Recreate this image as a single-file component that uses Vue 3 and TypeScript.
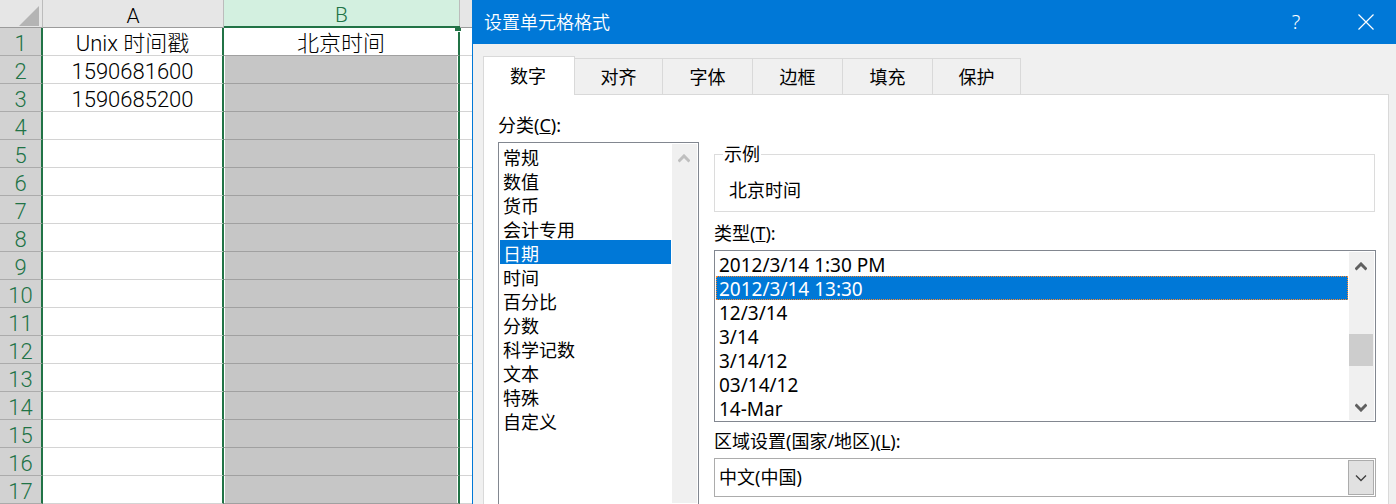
<script setup lang="ts">
import { ref } from 'vue'

interface Row {
  a: string
  b: string
}

const filled: Row[] = [
  { a: 'Unix 时间戳', b: '北京时间' },
  { a: '1590681600', b: '' },
  { a: '1590685200', b: '' },
]
const rows: Row[] = Array.from({ length: 17 }, (_, i) => filled[i] ?? { a: '', b: '' })

const tabs: string[] = ['数字', '对齐', '字体', '边框', '填充', '保护']
const activeTab = ref('数字')

const categories: string[] = [
  '常规', '数值', '货币', '会计专用', '日期', '时间',
  '百分比', '分数', '科学记数', '文本', '特殊', '自定义',
]
const category = ref('日期')

const types: string[] = [
  '2012/3/14 1:30 PM', '2012/3/14 13:30', '12/3/14', '3/14', '3/14/12', '03/14/12', '14-Mar',
]
const type = ref('2012/3/14 13:30')

const locale = ref('中文(中国)')
</script>

<template>
  <div class="page">
    <section class="sheet">
      <table>
        <colgroup>
          <col class="col-num" />
          <col class="col-a" />
          <col class="col-b" />
          <col />
        </colgroup>
        <thead>
          <tr>
            <th class="corner">
              <svg width="20" height="20" viewBox="0 0 20 20" aria-hidden="true">
                <path d="M20 0V20H0Z" fill="#b4b4b4" />
              </svg>
            </th>
            <th scope="col">A</th>
            <th scope="col" class="picked">B<span class="handle"></span></th>
            <th></th>
          </tr>
        </thead>
        <tbody>
          <tr v-for="(row, i) in rows" :key="i" :class="{ first: i === 0 }">
            <th scope="row">{{ i + 1 }}</th>
            <td class="a">{{ row.a }}</td>
            <td class="b">{{ row.b }}</td>
            <td></td>
          </tr>
        </tbody>
      </table>
    </section>

    <section class="dialog" role="dialog" aria-labelledby="dialog-title">
      <header class="titlebar">
        <h1 id="dialog-title">设置单元格格式</h1>
        <button type="button" class="help" aria-label="帮助">?</button>
        <button type="button" class="close" aria-label="关闭">
          <svg width="16" height="16" viewBox="0 0 16 16" aria-hidden="true">
            <path d="M.5 .5L15.5 15.5M15.5 .5L.5 15.5" stroke="#fff" stroke-width="1.2" />
          </svg>
        </button>
      </header>

      <div class="body">
        <nav class="tabs" role="tablist">
          <button
            v-for="tab in tabs"
            :key="tab"
            type="button"
            role="tab"
            class="tab"
            :class="{ active: tab === activeTab }"
            :aria-selected="tab === activeTab"
            @click="activeTab = tab"
          >{{ tab }}</button>
        </nav>

        <div class="panel">
          <div class="left">
            <label for="category">分类(<u>C</u>):</label>
            <div class="listbox grow">
              <select id="category" v-model="category" size="12">
                <option v-for="c in categories" :key="c" :value="c">{{ c }}</option>
              </select>
              <div class="scrollbar" aria-hidden="true">
                <svg class="faint" width="12" height="10" viewBox="0 0 12 10">
                  <path d="M.5 7.5L6 2L11.5 7.5" />
                </svg>
              </div>
            </div>
          </div>

          <div class="right">
            <fieldset>
              <legend>示例</legend>
              <p>北京时间</p>
            </fieldset>

            <label for="type" class="type-label">类型(<u>T</u>):</label>
            <div class="listbox">
              <select id="type" v-model="type" size="7" class="dates">
                <option v-for="t in types" :key="t" :value="t">{{ t }}</option>
              </select>
              <div class="scrollbar" aria-hidden="true">
                <svg width="12" height="10" viewBox="0 0 12 10">
                  <path d="M.5 7.5L6 2L11.5 7.5" />
                </svg>
                <span class="thumb"></span>
                <svg width="12" height="10" viewBox="0 0 12 10">
                  <path d="M.5 2.5L6 8L11.5 2.5" />
                </svg>
              </div>
            </div>

            <label for="locale" class="locale-label">区域设置(国家/地区)(<u>L</u>):</label>
            <div class="combo">
              <select id="locale" v-model="locale">
                <option>中文(中国)</option>
              </select>
              <span class="drop" aria-hidden="true">
                <svg width="12" height="8" viewBox="0 0 12 8">
                  <path d="M1 1.5L6 6.5L11 1.5" />
                </svg>
              </span>
            </div>
          </div>
        </div>
      </div>
    </section>
  </div>
</template>

<style>
body {
  overflow: hidden;
}
</style>

<style scoped>
* {
  box-sizing: border-box;
}

.page {
  display: flex;
  height: 100vh;
  overflow: hidden;
  background: #fff;
  color: #000;
  font-family: "Noto Sans", "Noto Sans CJK SC", sans-serif;
  font-size: 18px;
  line-height: 24px;
}

/* Worksheet */
.sheet {
  flex: 0 0 472px;
  overflow: hidden;
  font-family: Roboto, "Noto Sans CJK SC", sans-serif;
  font-size: 22px;
}

table {
  width: 100%;
  table-layout: fixed;
  border-collapse: separate;
  border-spacing: 0;
}

.col-num {
  width: 43px;
}

.col-a {
  width: 181px;
}

.col-b {
  width: 236px;
}

th,
td {
  height: 28px;
  padding: 4px 0 0;
  border-bottom: 1px solid #d4d4d4;
  font-weight: 300;
  line-height: 23px;
  text-align: center;
  white-space: nowrap;
}

thead th {
  position: relative;
  padding-top: 5px;
  border-right: 1px solid #bcbcbc;
  border-bottom-color: #9b9b9b;
  background: #e6e6e6;
  font-size: 21px;
  line-height: 22px;
}

thead th:last-child {
  border-right: 0;
}

thead .corner {
  padding: 4px 3px 0 0;
  line-height: 0;
  text-align: right;
}

thead .picked {
  border-bottom: 2px solid #217346;
  background: #d3f0e0;
  color: #217346;
  line-height: 21px;
}

.handle {
  position: absolute;
  right: -2px;
  bottom: -6px;
  width: 6px;
  height: 6px;
  border-bottom: 1px solid #fff;
  background: #217346;
}

tbody th {
  border-right: 2px solid #217346;
  border-bottom-color: #ababab;
  background: #d2d2d2;
  color: #217346;
}

.a {
  border-right: 2px solid #217346;
}

.b {
  border-right: 2px solid #217346;
  border-bottom-color: #a0a0a0;
  background: #c6c6c6;
  box-shadow: inset 1px 0 #fff, inset -1px 0 #fff;
}

.first .b {
  background: #fff;
}

/* Dialog */
.dialog {
  display: flex;
  flex: 1;
  flex-direction: column;
  min-width: 0;
  border-left: 1px solid #0078d7;
  background: #f0f0f0;
}

button {
  padding: 0;
  border: 0;
  background: none;
  color: inherit;
  font: inherit;
}

.titlebar {
  display: flex;
  flex: none;
  align-items: center;
  height: 44px;
  padding-left: 11px;
  background: #0078d7;
  color: #fff;
}

h1 {
  flex: 1;
  margin: 0;
  font-size: 18px;
  font-weight: 350;
}

.help {
  width: 80px;
  font-size: 20px;
  font-weight: 300;
}

.close {
  display: flex;
  justify-content: center;
  width: 60px;
}

.body {
  display: flex;
  flex: 1;
  flex-direction: column;
  min-height: 0;
  padding: 12px 7px 0 10px;
}

.tabs {
  display: flex;
  align-items: flex-end;
  flex: none;
  height: 39px;
  margin-bottom: -1px;
  z-index: 1;
}

.tab {
  width: 90px;
  height: 37px;
  border: 1px solid #d9d9d9;
  border-left: 0;
  background: #f0f0f0;
}

.tab:nth-child(2),
.tab:last-child {
  width: 88px;
}

.tab.active {
  width: 92px;
  height: 39px;
  padding-right: 2px;
  border-left: 1px solid #d9d9d9;
  border-bottom: 0;
  background: #fff;
}

.panel {
  display: flex;
  flex: 1;
  gap: 15px;
  min-height: 0;
  padding: 18px 12px 0 14px;
  border: 1px solid #d9d9d9;
  border-bottom: 0;
  background: #fff;
}

label {
  display: block;
  flex: none;
}

.left {
  display: flex;
  flex: 0 0 201px;
  flex-direction: column;
  gap: 5px;
}

.listbox {
  display: flex;
  padding: 1px;
  border: 1px solid #828790;
  background: #fff;
}

.listbox.grow {
  flex: 1;
  border-bottom: 0;
}

.listbox select {
  flex: 1;
  min-width: 0;
  margin: 0;
  padding: 0;
  border: 0;
  border-radius: 0;
  outline: 0;
  background: #fff;
  color: #000;
  font: inherit;
  overflow: hidden;
}

.listbox .dates {
  height: 168px;
  font-size: 19px;
}

option {
  height: 24px;
  padding: 0 3px;
  color: #000;
}

.listbox option:checked {
  background: #0078d7 linear-gradient(#0078d7, #0078d7);
  color: #fff;
}

.dates option:checked {
  outline: 1px dotted #ff8728;
  outline-offset: -1px;
}

.scrollbar {
  display: flex;
  flex: 0 0 25px;
  flex-direction: column;
  align-items: center;
  margin-left: 1px;
  padding: 10px 1px 8px 0;
  background: #f0f0f0;
}

.scrollbar svg {
  flex: none;
  fill: none;
  stroke: #606060;
  stroke-width: 3;
}

.scrollbar .faint {
  stroke: #bfbfbf;
}

.thumb {
  width: 24px;
  height: 32px;
  margin: 62px 0 auto;
  background: #cdcdcd;
}

.right {
  flex: 1;
  min-width: 0;
  padding-top: 30px;
}

fieldset {
  min-width: 0;
  height: 69px;
  margin: 0 1px 0 0;
  padding: 0 14px;
  border: 1px solid #dcdcdc;
}

legend {
  margin-left: -6px;
  padding: 0 1px;
  line-height: 22px;
}

p {
  margin: 13px 0 0;
}

.type-label {
  margin: 9px 0 5px;
}

.locale-label {
  margin: 7px 0 5px;
}

.combo {
  display: grid;
  height: 39px;
  padding: 1px;
  border: 1px solid #acacac;
}

.combo select {
  grid-area: 1 / 1;
  width: 100%;
  padding: 0 30px 2px 3px;
  border: 0;
  border-radius: 0;
  outline: 0;
  appearance: none;
  background: #fff;
  color: #000;
  font: inherit;
}

.drop {
  display: flex;
  grid-area: 1 / 1;
  align-items: center;
  justify-content: center;
  justify-self: end;
  width: 26px;
  border: 1px solid #acacac;
  background: #e1e1e1;
  pointer-events: none;
}

.drop svg {
  fill: none;
  stroke: #404040;
  stroke-width: 1.4;
}
</style>
